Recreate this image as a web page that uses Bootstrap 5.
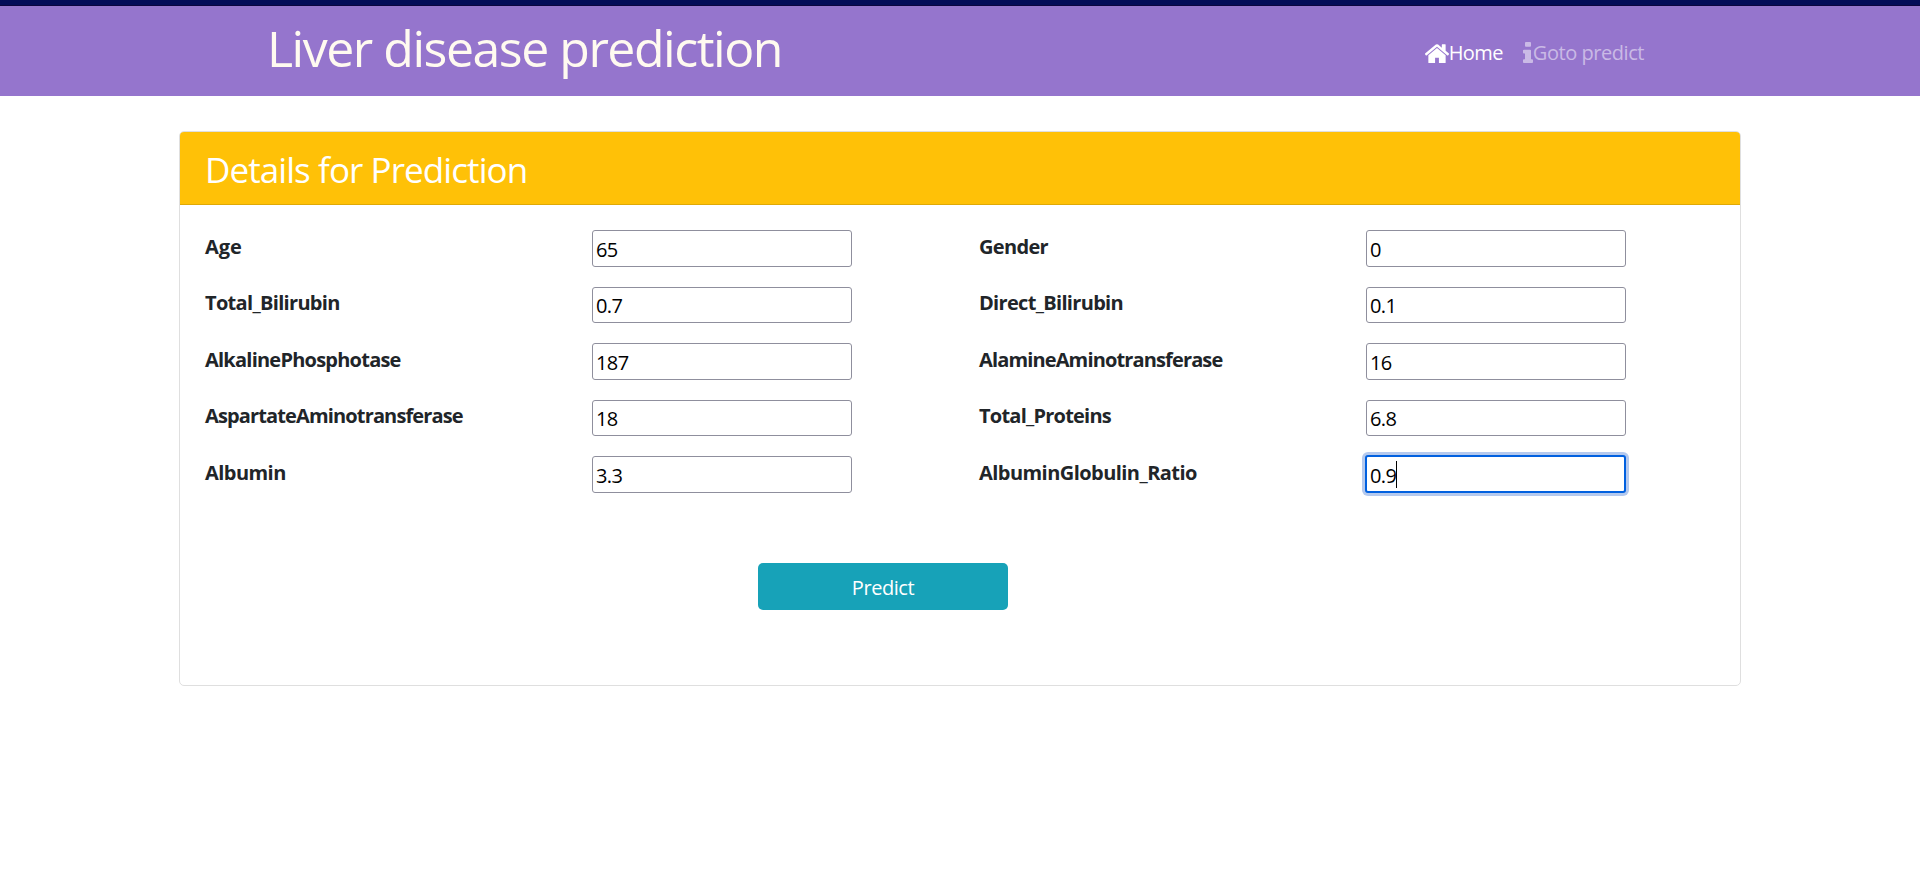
<!DOCTYPE html>
<html lang="en">
<head>
<meta charset="utf-8">
<meta name="viewport" content="width=device-width, initial-scale=1">
<title>Liver disease prediction</title>
<link href="https://cdn.jsdelivr.net/npm/bootstrap@5.3.0/dist/css/bootstrap.min.css" rel="stylesheet">
<style>
  body { font-family: "Open Sans", "Noto Sans", sans-serif; font-size: 20px; line-height: 30px; color: #212529; }
  .top-strip { height: 6px; background: #040c58; border-bottom: 1px solid #0c0540; }
  .site-bar { height: 90px; background: #9575cd; padding: 0 276px 0 267px; }
  .site-title { font-size: 50px; line-height: 60px; color: #fffaf0; margin-top: 12px; letter-spacing: -1.48px; }
  .site-links { margin-top: 32px; gap: 20px; }
  .site-links .nav-link { padding: 0; color: rgba(255,255,255,.5); letter-spacing: -.45px; }
  .site-links .nav-link.active { color: #fff; letter-spacing: -.6px; }
  .icon-home { width: 24px; height: 19.5px; margin-top: 5.5px; }
  .icon-info { width: 10px; height: 21px; margin-top: 4px; }
  .details-card { width: 1562px; height: 555px; margin: 35px auto 0; border: 1px solid #dfdfdf; border-radius: 5px; }
  .details-card .card-header { height: 73px; padding: 17px 25px 0; background: #ffc107; border-bottom: 1px solid #dfa906; border-radius: 4px 4px 0 0; }
  .details-card h2 { font-size: 35px; line-height: 42px; color: #fff; font-weight: 400; letter-spacing: -.92px; }
  .details-card .card-body { padding: 25px 6px 0; }
  .details-card .row { --bs-gutter-x: 38px; margin: 0; height: 56.5px; }
  .details-card .field-name { margin-top: -.2px; font-weight: 700; line-height: 34px; letter-spacing: -.68px; white-space: nowrap; }
  .details-card .fit-none { letter-spacing: 0; }
  .details-card .fit-loose { letter-spacing: -.55px; }
  .details-card .fit-snug { letter-spacing: -.77px; }
  .details-card .fit-tight { letter-spacing: -.86px; }
  .field-box { width: 260px; height: 36.5px; border: 1px solid #8f8f9d; border-radius: 3px; padding: 3.8px 3px 0; color: #000; line-height: 30px; letter-spacing: -.62px; background: #fff; }
  .field-box.is-focused { width: 261px; height: 37.5px; margin: -1px 0 0 -1px; border: 2px solid #0060df; box-shadow: 0 0 0 3px #b4c9ee; }
  .text-caret { left: 29px; top: 4px; width: 1px; height: 27px; background: #000; }
  .btn-predict { width: 250px; height: 47px; margin: 50.5px 0 0 572px; padding: 2px 0 0; background: #17a2b8; color: #fff; font-size: 20px; border: 0; border-radius: 5px; letter-spacing: -.45px; }
</style>
</head>
<body>
<div class="top-strip"></div>
<nav class="site-bar d-flex justify-content-between align-items-start">
  <span class="site-title">Liver disease prediction</span>
  <div class="site-links d-flex">
    <a class="nav-link active d-flex" href="#"><svg class="icon-home flex-shrink-0" viewBox="96 240 1600 1296" preserveAspectRatio="none" fill="currentColor"><path d="M1472 992v480q0 26-19 45t-45 19h-384v-384h-256v384h-384q-26 0-45-19t-19-45v-480q0-1 .5-3t.5-3l575-474 575 474q1 2 1 6zm223-69l-62 74q-8 9-21 11h-3q-13 0-21-7l-692-577-692 577q-12 8-24 7-13-2-21-11l-62-74q-8-10-7-23.5t11-21.5l719-599q32-26 76-26t76 26l244 204v-195q0-14 9-23t23-9h192q14 0 23 9t9 23v408l219 182q10 8 11 21.5t-7 23.5z"/></svg>Home</a>
    <a class="nav-link d-flex" href="#"><svg class="icon-info flex-shrink-0" viewBox="576 128 640 1408" preserveAspectRatio="none" fill="currentColor"><path d="M1216 1344v128q0 26-19 45t-45 19h-512q-26 0-45-19t-19-45v-128q0-26 19-45t45-19h64v-384h-64q-26 0-45-19t-19-45v-128q0-26 19-45t45-19h384q26 0 45 19t19 45v576h64q26 0 45 19t19 45zm-128-1152v192q0 26-19 45t-45 19h-256q-26 0-45-19t-19-45v-192q0-26 19-45t45-19h256q26 0 45 19t19 45z"/></svg>Goto predict</a>
  </div>
</nav>

<main class="card details-card">
  <div class="card-header"><h2 class="mb-0">Details for Prediction</h2></div>
  <div class="card-body">
    <div class="row">
      <div class="col-3 field-name fit-none">Age</div>
      <div class="col-3"><div class="field-box">65</div></div>
      <div class="col-3 field-name">Gender</div>
      <div class="col-3"><div class="field-box">0</div></div>
    </div>
    <div class="row">
      <div class="col-3 field-name">Total_Bilirubin</div>
      <div class="col-3"><div class="field-box">0.7</div></div>
      <div class="col-3 field-name">Direct_Bilirubin</div>
      <div class="col-3"><div class="field-box">0.1</div></div>
    </div>
    <div class="row">
      <div class="col-3 field-name fit-snug">AlkalinePhosphotase</div>
      <div class="col-3"><div class="field-box">187</div></div>
      <div class="col-3 field-name fit-tight">AlamineAminotransferase</div>
      <div class="col-3"><div class="field-box">16</div></div>
    </div>
    <div class="row">
      <div class="col-3 field-name fit-tight">AspartateAminotransferase</div>
      <div class="col-3"><div class="field-box">18</div></div>
      <div class="col-3 field-name fit-snug">Total_Proteins</div>
      <div class="col-3"><div class="field-box">6.8</div></div>
    </div>
    <div class="row">
      <div class="col-3 field-name fit-loose">Albumin</div>
      <div class="col-3"><div class="field-box">3.3</div></div>
      <div class="col-3 field-name fit-loose">AlbuminGlobulin_Ratio</div>
      <div class="col-3"><div class="field-box is-focused position-relative">0.9<span class="text-caret position-absolute"></span></div></div>
    </div>
    <button type="button" class="btn btn-predict">Predict</button>
  </div>
</main>
<script src="https://cdn.jsdelivr.net/npm/bootstrap@5.3.0/dist/js/bootstrap.bundle.min.js"></script>
</body>
</html>
